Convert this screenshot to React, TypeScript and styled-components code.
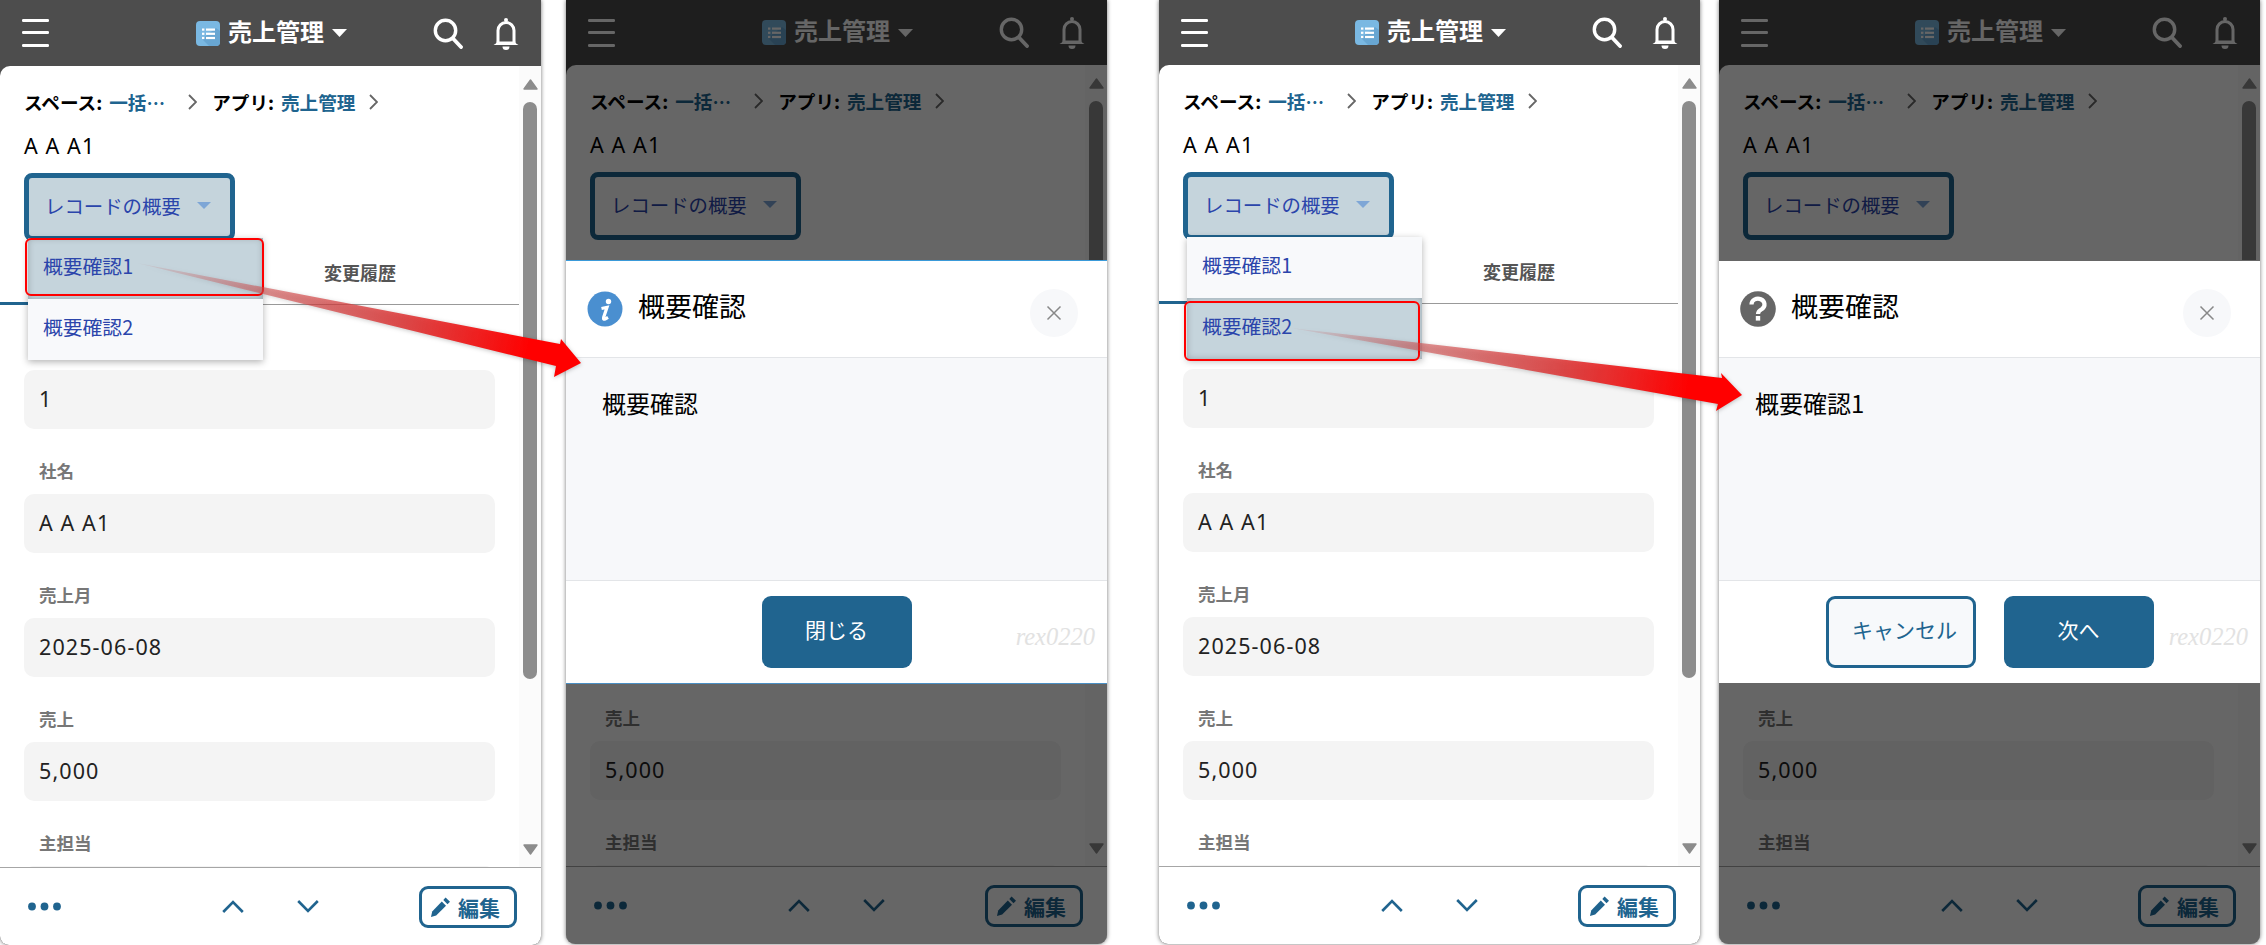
import React from 'react';
import styled, { createGlobalStyle } from 'styled-components';

const BLUE = '#20648f';
const SANS = '"Noto Sans", "Noto Sans CJK JP", sans-serif';
const JP = '"Noto Sans CJK JP", "Noto Sans", sans-serif';

const Global = createGlobalStyle`
  html, body { margin: 0; padding: 0; background: #fff; font-family: ${SANS}; }
  * { box-sizing: border-box; }
`;

const Page = styled.div`
  position: relative;
  display: flex;
  align-items: flex-start;
  width: 2266px;
  height: 945px;
  overflow: hidden;
  background: #fff;
`;

const Panel = styled.section<{ $gap: number; $tall?: boolean }>`
  position: relative;
  display: flex;
  flex-direction: column;
  flex: 0 0 541px;
  margin-left: ${p => p.$gap}px;
  height: ${p => (p.$tall ? 945 : 944)}px;
  background: #4d4d4d;
  border-radius: 0 0 9px 9px;
  box-shadow: 0 0 4px rgba(0, 0, 0, 0.55);
  overflow: visible;
`;

const TopBar = styled.header<{ $tall?: boolean }>`
  display: flex;
  align-items: center;
  flex: 0 0 ${p => (p.$tall ? 66 : 65)}px;
  padding: 0 22px;
  color: #fff;
`;

const AppTitle = styled.div`
  display: flex;
  align-items: center;
  margin-left: 147px;
  font-family: ${JP};
  font-size: 24px;
  font-weight: 700;
  line-height: 30px;
`;

const TitleText = styled.span`
  margin: -5px 8px 0 8px;
`;

const TopIcons = styled.div`
  display: flex;
  align-items: center;
  gap: 30px;
  margin-left: auto;
`;

const Main = styled.div`
  display: flex;
  flex: 1;
  min-height: 0;
  background: #fff;
  border-radius: 10px 0 0 0;
  overflow: hidden;
`;

const Content = styled.div`
  flex: 1;
  min-width: 0;
  overflow: hidden;
  padding-top: 24px;
`;

const Crumbs = styled.div`
  display: flex;
  align-items: center;
  height: 24px;
  margin-left: 24px;
  font-family: ${JP};
  font-size: 18.6px;
  font-weight: 700;
  line-height: 22px;
  color: #000;
`;

const CrumbValue = styled.span<{ $w: number }>`
  display: block;
  width: ${p => p.$w}px;
  margin-left: 7px;
  color: ${BLUE};
  white-space: nowrap;
`;

const CrumbSep = styled.svg`
  flex: none;
  margin: 0 15px 0 13px;
`;

const RecordTitle = styled.div`
  margin: 18px 0 0 24px;
  font-size: 21.5px;
  line-height: 28px;
  letter-spacing: 1.1px;
  color: #000;
`;

const SelectWrap = styled.div`
  position: relative;
  width: 211px;
  margin: 13px 0 0 24px;
`;

const SelectBox = styled.div<{ $open?: boolean }>`
  display: flex;
  align-items: center;
  gap: 16px;
  height: 68px;
  padding: 0 0 3px 16px;
  border: 5px solid ${BLUE};
  border-radius: 8px;
  background: ${p => (p.$open ? '#c5d4dc' : 'transparent')};
  font-family: ${JP};
  font-size: 19.4px;
  line-height: 26px;
  color: #2b45ab;
  white-space: nowrap;
`;

const Menu = styled.div`
  position: absolute;
  top: 65px;
  left: 4px;
  z-index: 2;
  width: 235px;
  background: #f8f9fb;
  box-shadow: 0 2px 7px rgba(0, 0, 0, 0.3);
`;

const MenuItem = styled.div<{ $mark?: 'first' | 'second' }>`
  position: relative;
  display: flex;
  align-items: center;
  height: 61px;
  padding: 0 0 5px 15px;
  font-family: ${JP};
  font-size: 19.8px;
  line-height: 26px;
  color: #2b45ab;
  background: ${p => (p.$mark ? '#c5d4dc' : 'transparent')};
  box-shadow: ${p => (p.$mark ? 'inset 0 0 7px rgba(0, 0, 0, 0.22)' : 'none')};

  &::after {
    content: ${p => (p.$mark ? '""' : 'none')};
    position: absolute;
    left: -3px;
    right: ${p => (p.$mark === 'first' ? -1 : 2)}px;
    top: ${p => (p.$mark === 'first' ? 0 : 3)}px;
    bottom: ${p => (p.$mark === 'first' ? 3 : -2)}px;
    border: 2px solid #f00;
    border-radius: 6px;
  }
`;

const TabBar = styled.div`
  display: flex;
  height: 64px;
  border-bottom: 1px solid #999;
`;

const Tab = styled.div<{ $active?: boolean; $covered?: boolean }>`
  display: flex;
  align-items: center;
  justify-content: center;
  width: 240px;
  margin-bottom: ${p => (p.$active ? -1 : 0)}px;
  padding-bottom: ${p => (p.$active ? 0 : 2)}px;
  border-bottom: ${p => (p.$active ? `3px solid ${BLUE}` : 'none')};
  font-family: ${JP};
  font-size: 18px;
  font-weight: 700;
  color: ${p => (p.$covered ? 'transparent' : '#555')};
`;

const Field = styled.div<{ $covered?: boolean }>`
  margin: 31px 24px 0;
  visibility: ${p => (p.$covered ? 'hidden' : 'visible')};
`;

const FieldLabel = styled.div<{ $covered?: boolean }>`
  height: 24px;
  margin: 0 0 10px 15px;
  font-family: ${JP};
  font-size: 17.5px;
  font-weight: 700;
  line-height: 22px;
  color: #777;
  visibility: ${p => (p.$covered ? 'hidden' : 'inherit')};
`;

const FieldValue = styled.div`
  display: flex;
  align-items: center;
  height: 59px;
  padding: 0 0 3px 15px;
  border-radius: 10px;
  background: #f4f4f4;
  font-size: 21.5px;
  letter-spacing: 1.1px;
  color: #222;
`;

const ScrollBar = styled.div`
  display: flex;
  flex-direction: column;
  align-items: center;
  flex: 0 0 22px;
  padding: 13px 0 12px;
  background: #fbfbfb;
`;

const ScrollThumb = styled.div`
  width: 14px;
  height: 577px;
  margin: 12px 0 auto;
  border-radius: 7px;
  background: #8c8c8c;
`;

const Footer = styled.footer`
  display: flex;
  align-items: center;
  flex: 0 0 78px;
  padding-right: 24px;
  border-top: 1px solid #a6a6a6;
  border-radius: 0 0 9px 9px;
  background: #fff;
`;

const Dots = styled.svg`
  margin-left: 28px;
`;

const NavIcon = styled.svg<{ $gap: number }>`
  margin-left: ${p => p.$gap}px;
`;

const EditButton = styled.div`
  display: flex;
  align-items: center;
  gap: 8px;
  width: 98px;
  height: 42px;
  margin-left: auto;
  padding-left: 9px;
  border: 3px solid ${BLUE};
  border-radius: 9px;
  font-family: ${JP};
  font-size: 21px;
  font-weight: 700;
  line-height: 28px;
  color: ${BLUE};
`;

const Dim = styled.div`
  position: absolute;
  inset: 0;
  z-index: 3;
  border-radius: 0 0 9px 9px;
  background: rgba(0, 0, 0, 0.6);
`;

const Modal = styled.div<{ $accent?: boolean }>`
  position: absolute;
  top: 260px;
  left: 0;
  right: 0;
  z-index: 4;
  display: flex;
  flex-direction: column;
  height: 424px;
  border-top: 1px solid ${p => (p.$accent ? '#3a9ad9' : '#666')};
  border-bottom: 1px solid ${p => (p.$accent ? '#4a8fc4' : '#666')};
  background: #fff;
`;

const ModalHead = styled.div`
  display: flex;
  align-items: center;
  flex: 0 0 97px;
  padding: 0 29px 0 21px;
  border-bottom: 1px solid #e3e5e8;
`;

const ModalTitle = styled.div`
  margin: -6px 0 0 15px;
  font-family: ${JP};
  font-size: 27px;
  line-height: 36px;
  color: #000;
`;

const CloseButton = styled.div`
  display: flex;
  align-items: center;
  justify-content: center;
  width: 48px;
  height: 48px;
  margin: 8px 0 0 auto;
  border-radius: 50%;
  background: #f7f8fa;
`;

const ModalBody = styled.div`
  flex: 1;
  padding: 28px 36px 0;
  background: #f7f8fa;
  font-family: ${JP};
  font-size: 24px;
  line-height: 34px;
  color: #000;
`;

const ModalFoot = styled.div`
  position: relative;
  display: flex;
  align-items: center;
  justify-content: center;
  gap: 28px;
  flex: 0 0 103px;
  border-top: 1px solid #e3e5e8;
`;

const ActionButton = styled.div<{ $ghost?: boolean }>`
  display: flex;
  align-items: center;
  justify-content: center;
  width: 150px;
  height: 72px;
  padding: ${p => (p.$ghost ? '0 0 6px 8px' : '0 0 6px')};
  border: ${p => (p.$ghost ? `3px solid ${BLUE}` : 'none')};
  border-radius: 9px;
  background: ${p => (p.$ghost ? '#f7f9fb' : BLUE)};
  font-family: ${JP};
  font-size: 21px;
  line-height: 28px;
  color: ${p => (p.$ghost ? BLUE : '#fff')};
`;

const Watermark = styled.div`
  position: absolute;
  top: 38px;
  right: 12px;
  font-family: "Liberation Serif", serif;
  font-size: 24.5px;
  font-style: italic;
  line-height: 36px;
  color: #e2e2e2;
`;

const ArrowLayer = styled.svg`
  position: absolute;
  left: 0;
  top: 0;
  z-index: 6;
  pointer-events: none;
  filter: drop-shadow(0 1px 2px rgba(0, 0, 0, 0.25));
`;

const Hamburger = () => (
  <svg width="27" height="28" viewBox="0 0 27 28">
    <rect y="0" width="27" height="3" rx="1.2" fill="currentColor" />
    <rect y="12" width="27" height="3" rx="1.2" fill="currentColor" />
    <rect y="25" width="27" height="3" rx="1.2" fill="currentColor" />
  </svg>
);

const AppIcon = () => (
  <svg width="24" height="25" viewBox="0 0 24 25">
    <rect width="24" height="25" rx="4" fill="#7ab8e2" />
    <path d="M6 18 L20 7 L24 10 V21 a4 4 0 0 1 -4 4 H13 Z" fill="#68a6d2" />
    <g fill="#fff">
      <rect x="6" y="7.5" width="2.4" height="2.2" />
      <rect x="10" y="7.5" width="9" height="2.2" />
      <rect x="6" y="11.7" width="2.4" height="2.2" />
      <rect x="10" y="11.7" width="9" height="2.2" />
      <rect x="6" y="15.9" width="2.4" height="2.2" />
      <rect x="10" y="15.9" width="9" height="2.2" />
    </g>
  </svg>
);

const CaretDown = ({ w, h, c }: { w: number; h: number; c: string }) => (
  <svg width={w} height={h} viewBox="0 0 14 8" preserveAspectRatio="none" style={{ flex: 'none' }}>
    <path d="M0 0 H14 L7 8 Z" fill={c} />
  </svg>
);

const SearchIcon = () => (
  <svg width="30" height="31" viewBox="0 0 30 31">
    <circle cx="12.5" cy="12.5" r="10.2" fill="none" stroke="#fff" strokeWidth="3.4" />
    <path d="M20 20.5 L28 29" stroke="#fff" strokeWidth="3.8" strokeLinecap="round" />
  </svg>
);

const BellIcon = () => (
  <svg width="26" height="33" viewBox="0 0 26 33">
    <circle cx="13" cy="3" r="2" fill="#fff" />
    <path d="M5 25 V13.5 a8 8 0 0 1 16 0 V25" fill="none" stroke="#fff" strokeWidth="3" />
    <path d="M0.5 28 Q3.6 26.6 3.8 24.5 H22.2 Q22.4 26.6 25.5 28 Z" fill="#fff" />
    <path d="M9.5 29.5 H16.5 a3.5 3.5 0 0 1 -7 0 Z" fill="#fff" />
  </svg>
);

const Chevron = () => (
  <CrumbSep width="9" height="16" viewBox="0 0 9 16">
    <path d="M1 1 L8 8 L1 15" fill="none" stroke="#666" strokeWidth="1.8" />
  </CrumbSep>
);

const Pencil = () => (
  <svg width="19" height="20" viewBox="0 0 19 20">
    <path d="M0 20 L1.2 14.5 L10.8 4.5 L15 8.8 L5.2 18.6 Z" fill={BLUE} />
    <path d="M12.3 3 L14.6 0.5 L19 4.8 L16.5 7.3 Z" fill={BLUE} />
  </svg>
);

const InfoIcon = () => (
  <svg width="36" height="36" viewBox="0 0 36 36" style={{ flex: 'none' }}>
    <circle cx="18" cy="18" r="17.5" fill="#4a8fd0" />
    <circle cx="21.5" cy="10.5" r="2.7" fill="#fff" />
    <path d="M14.5 17.5 L20 16.3 L16.6 26.5 Q16 29 18.5 27.8 L21 26.3" fill="none" stroke="#fff" strokeWidth="3.2" />
  </svg>
);

const QuestionIcon = () => (
  <svg width="36" height="36" viewBox="0 0 36 36" style={{ flex: 'none' }}>
    <circle cx="18" cy="18" r="17.8" fill="#666" />
    <path d="M11.5 13.5 a6.5 5.8 0 1 1 10.5 4.5 q-4 2.2 -4 5" fill="none" stroke="#fff" strokeWidth="4.2" />
    <rect x="15.8" y="25" width="4.4" height="4.6" fill="#fff" />
  </svg>
);

const CloseIcon = () => (
  <svg width="16" height="16" viewBox="0 0 16 16">
    <path d="M1.5 1.5 L14.5 14.5 M14.5 1.5 L1.5 14.5" stroke="#888" strokeWidth="1.5" />
  </svg>
);

const ScrollArrow = ({ down }: { down?: boolean }) => (
  <svg width="15" height="11" viewBox="0 0 15 11" style={{ flex: 'none' }}>
    <path
      d={down ? 'M1 1 H14 L7.5 10 Z' : 'M1 10 H14 L7.5 1 Z'}
      fill="#8c8c8c"
      stroke="#8c8c8c"
      strokeWidth="1.4"
      strokeLinejoin="round"
    />
  </svg>
);

const fields = [
  { label: 'レコード番号', value: '1' },
  { label: '社名', value: 'A A A1' },
  { label: '売上月', value: '2025-06-08' },
  { label: '売上', value: '5,000' },
  { label: '主担当', value: '' },
];

type PhoneProps = {
  gap: number;
  tall?: boolean;
  menu?: 'first' | 'second';
  modal?: React.ReactNode;
};

const Phone = ({ gap, tall, menu, modal }: PhoneProps) => (
  <Panel $gap={gap} $tall={tall}>
    <TopBar $tall={tall}>
      <Hamburger />
      <AppTitle>
        <AppIcon />
        <TitleText>売上管理</TitleText>
        <CaretDown w={15} h={8} c="#fff" />
      </AppTitle>
      <TopIcons>
        <SearchIcon />
        <BellIcon />
      </TopIcons>
    </TopBar>
    <Main>
      <Content>
        <Crumbs>
          <span>スペース:</span>
          <CrumbValue $w={66}>一括…</CrumbValue>
          <Chevron />
          <span>アプリ:</span>
          <CrumbValue $w={75}>売上管理</CrumbValue>
          <Chevron />
        </Crumbs>
        <RecordTitle>A A A1</RecordTitle>
        <SelectWrap>
          <SelectBox $open={!!menu}>
            レコードの概要
            <CaretDown w={14} h={7} c="#7ea6d6" />
          </SelectBox>
          {menu && (
            <Menu>
              <MenuItem $mark={menu === 'first' ? 'first' : undefined}>概要確認1</MenuItem>
              <MenuItem $mark={menu === 'second' ? 'second' : undefined}>概要確認2</MenuItem>
            </Menu>
          )}
        </SelectWrap>
        <TabBar>
          <Tab $active />
          {modal ? <Tab $covered /> : <Tab>変更履歴</Tab>}
        </TabBar>
        {fields.map((f, i) => (
          <Field key={f.label} $covered={!!modal && i < 3}>
            <FieldLabel $covered={i === 0}>{f.label}</FieldLabel>
            <FieldValue>{f.value}</FieldValue>
          </Field>
        ))}
      </Content>
      <ScrollBar>
        <ScrollArrow />
        <ScrollThumb />
        <ScrollArrow down />
      </ScrollBar>
    </Main>
    <Footer>
      <Dots width="33" height="9" viewBox="0 0 33 9">
        <circle cx="4" cy="4.5" r="3.9" fill={BLUE} />
        <circle cx="16.5" cy="4.5" r="3.9" fill={BLUE} />
        <circle cx="29" cy="4.5" r="3.9" fill={BLUE} />
      </Dots>
      <NavIcon $gap={161} width="22" height="13" viewBox="0 0 22 13">
        <path d="M1.2 12 L11 2 L20.8 12" fill="none" stroke={BLUE} strokeWidth="2.6" />
      </NavIcon>
      <NavIcon $gap={53} width="22" height="13" viewBox="0 0 22 13">
        <path d="M1.2 1 L11 11 L20.8 1" fill="none" stroke={BLUE} strokeWidth="2.6" />
      </NavIcon>
      <EditButton>
        <Pencil />
        編集
      </EditButton>
    </Footer>
    {modal && <Dim />}
    {modal}
  </Panel>
);

const InfoModal = () => (
  <Modal $accent>
    <ModalHead>
      <InfoIcon />
      <ModalTitle>概要確認</ModalTitle>
      <CloseButton>
        <CloseIcon />
      </CloseButton>
    </ModalHead>
    <ModalBody>概要確認</ModalBody>
    <ModalFoot>
      <ActionButton>閉じる</ActionButton>
      <Watermark>rex0220</Watermark>
    </ModalFoot>
  </Modal>
);

const ConfirmModal = () => (
  <Modal>
    <ModalHead>
      <QuestionIcon />
      <ModalTitle>概要確認</ModalTitle>
      <CloseButton>
        <CloseIcon />
      </CloseButton>
    </ModalHead>
    <ModalBody>概要確認1</ModalBody>
    <ModalFoot>
      <ActionButton $ghost>キャンセル</ActionButton>
      <ActionButton>次へ</ActionButton>
      <Watermark>rex0220</Watermark>
    </ModalFoot>
  </Modal>
);

const stops = (
  <>
    <stop offset="0" stopColor="#c84848" stopOpacity="0.05" />
    <stop offset="0.3" stopColor="#d04a4a" stopOpacity="0.6" />
    <stop offset="0.6" stopColor="#dd3030" stopOpacity="0.85" />
    <stop offset="0.88" stopColor="#f00" stopOpacity="1" />
  </>
);

const Arrows = () => (
  <ArrowLayer width="2266" height="945" viewBox="0 0 2266 945">
    <defs>
      <linearGradient id="arrowA" gradientUnits="userSpaceOnUse" x1="137" y1="263" x2="581" y2="363">
        {stops}
      </linearGradient>
      <linearGradient id="arrowB" gradientUnits="userSpaceOnUse" x1="1291" y1="328" x2="1742" y2="395">
        {stops}
      </linearGradient>
    </defs>
    <polygon points="137,263 560,344 561,339 581,363 554,377 556,366" fill="url(#arrowA)" />
    <polygon points="1291,328 1722,378 1721,373 1742,395 1716,411 1718,404" fill="url(#arrowB)" />
  </ArrowLayer>
);

export default function App() {
  return (
    <Page>
      <Global />
      <Phone gap={0} tall menu="first" />
      <Phone gap={25} modal={<InfoModal />} />
      <Phone gap={52} menu="second" />
      <Phone gap={19} modal={<ConfirmModal />} />
      <Arrows />
    </Page>
  );
}
